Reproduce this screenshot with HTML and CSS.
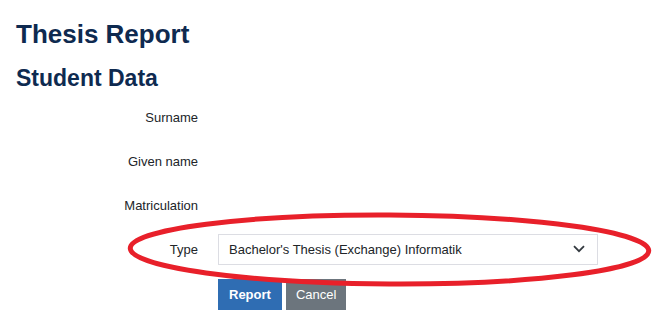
FILE: index.html
```html
<!DOCTYPE html>
<html>
<head>
<meta charset="utf-8">
<link rel="stylesheet" href="styles.css">
</head>
<body>
<div class="page">
  <h1 class="title">Thesis Report</h1>
  <h2 class="subtitle">Student Data</h2>
  <form class="form">
    <div class="row"><label class="label">Surname</label><div class="field"></div></div>
    <div class="row"><label class="label">Given name</label><div class="field"></div></div>
    <div class="row"><label class="label">Matriculation</label><div class="field"></div></div>
    <div class="row"><label class="label">Type</label>
      <div class="field">
        <div class="select">
          <span>Bachelor's Thesis (Exchange) Informatik</span>
          <svg class="chev" width="12" height="8" viewBox="0 0 12 8"><path d="M1 1.2 L6 6.2 L11 1.2" fill="none" stroke="#343a40" stroke-width="1.8"/></svg>
        </div>
      </div>
    </div>
    <div class="actions">
      <button type="button" class="btn btn-primary">Report</button>
      <button type="button" class="btn btn-secondary">Cancel</button>
    </div>
  </form>
  <svg class="mark" width="665" height="324" viewBox="0 0 665 324">
    <ellipse cx="389.5" cy="249.5" rx="259.25" ry="34.5" fill="none" stroke="#e8202a" stroke-width="5" transform="rotate(0.3 389.5 249.5)"/>
  </svg>
</div>
</body>
</html>
```
FILE: styles.css
```css
html, body { margin: 0; padding: 0; background: #fff; }
body { font-family: "Liberation Sans", Arial, sans-serif; color: #212529; }
.page { position: relative; width: 665px; height: 324px; overflow: hidden; padding: 0 16px; box-sizing: border-box; }
.title { margin: 0; padding-top: 19px; font-size: 26px; line-height: 1.2; font-weight: bold; color: #0e2a50; }
.subtitle { margin: 15px 0 0; font-size: 23px; line-height: 1.2; font-weight: bold; color: #0e2a50; }
.form { margin-top: 9px; display: flex; flex-direction: column; gap: 13px; }
.row { display: flex; align-items: center; height: 31px; gap: 20px; }
.label { width: 182px; text-align: right; font-size: 13px; }
.field { width: 380px; }
.select { height: 31px; box-sizing: border-box; border: 1px solid #dcdde3; display: flex; align-items: center; justify-content: space-between; padding: 0 12px 0 10px; font-size: 13px; }
.chev { display: block; }
.actions { display: flex; gap: 4px; margin-left: 202px; margin-top: 1px; }
.btn { height: 31px; border: 0; border-radius: 0; padding: 0 11px; font-family: "Liberation Sans", Arial, sans-serif; font-size: 13px; color: #fff; }
.btn-primary { background: #2f6db3; font-weight: bold; }
.btn-secondary { background: #6c757d; padding: 0 10px; }
.mark { position: absolute; left: 0; top: 0; pointer-events: none; }
```
